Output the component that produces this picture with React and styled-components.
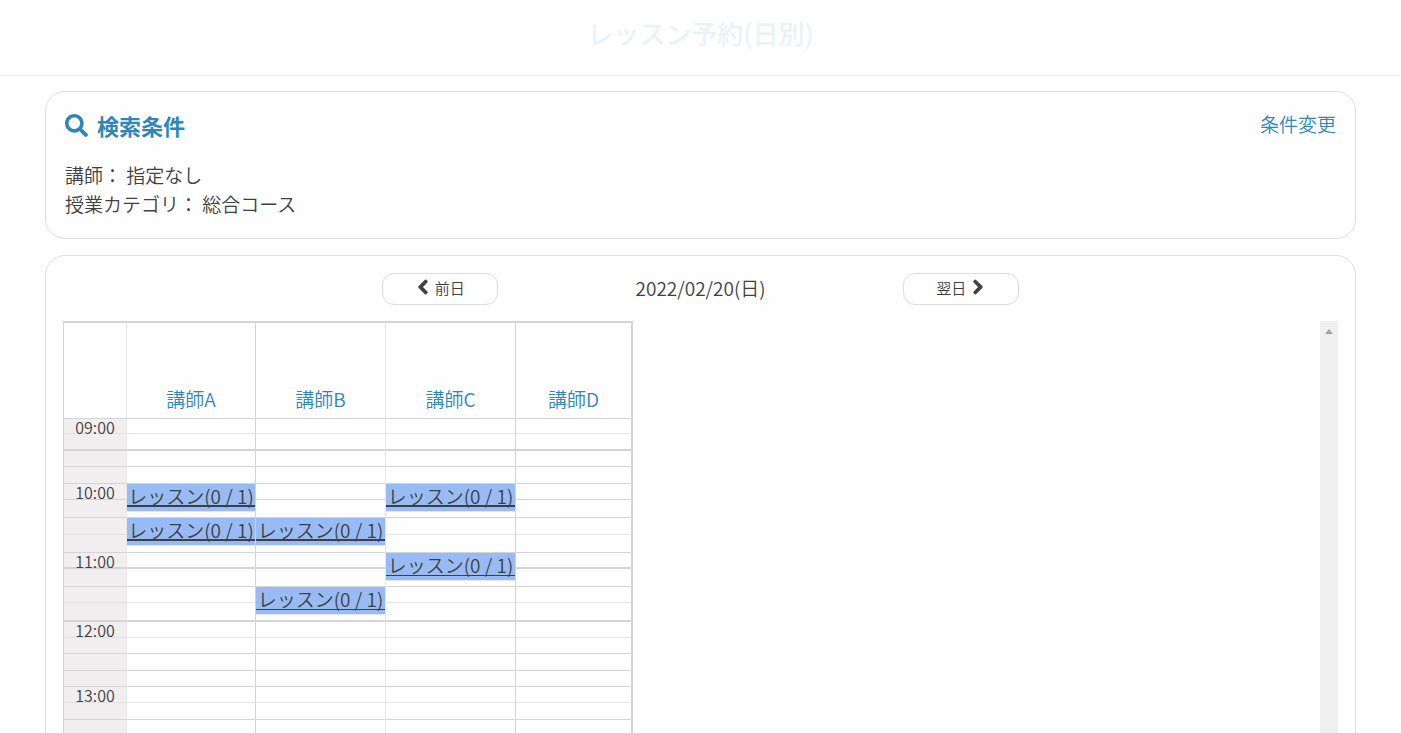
import React from "react"
import styled, { createGlobalStyle } from "styled-components"
import { FaSearch, FaChevronLeft, FaChevronRight } from "react-icons/fa"

const blue = "#2e86b9"
const line = "#d6d3d4"
const faint = "#e8e7e7"

const GlobalStyle = createGlobalStyle`
  * {
    box-sizing: border-box;
  }
  body {
    margin: 0;
    background: #fefefe;
    color: #3f3f3f;
    font-family: "Noto Sans CJK JP", sans-serif;
    font-size: 19px;
    font-weight: 350;
  }
  a {
    color: ${blue};
    text-decoration: none;
  }
`

const Page = styled.div`
  height: 100vh;
  overflow: hidden;
`

const Header = styled.header`
  padding: 14px 0 23px;
  border-bottom: 1px solid #efefef;
`

const Title = styled.h1`
  margin: 0;
  color: #eaf2f8;
  font-size: 26px;
  font-weight: 500;
  line-height: 38px;
  text-align: center;
`

const Main = styled.main`
  display: flex;
  flex-direction: column;
  gap: 16px;
  padding: 15px 45px;
`

const Card = styled.section`
  padding: ${p => p.$pad};
  border: 1px solid #dfdfdf;
  border-radius: 20px;
`

const CardHead = styled.div`
  display: flex;
  justify-content: space-between;
  margin-bottom: 20px;
  line-height: 28px;
`

const CardTitle = styled.h2`
  display: flex;
  align-items: center;
  gap: 9px;
  margin: 0;
  color: ${blue};
  font-size: 22px;
  font-weight: 700;
  line-height: 30px;
`

const Condition = styled.p`
  margin: 0;
  line-height: 29px;
`

const DayNav = styled.nav`
  display: flex;
  align-items: center;
  justify-content: space-between;
  width: 50%;
  margin: 0 auto 16px;
`

const CurrentDay = styled.span`
  height: 32px;
  line-height: 30px;
`

const DayButton = styled.button`
  display: flex;
  align-items: center;
  justify-content: center;
  gap: 4px;
  width: 116px;
  height: 32px;
  padding: 0 0 4px;
  border: 1px solid #dcdcdc;
  border-radius: 12px;
  background: transparent;
  color: inherit;
  font: inherit;
  font-size: 15px;

  > svg {
    overflow: visible;
    stroke: currentColor;
    stroke-width: 36px;
  }
`

const Schedule = styled.div`
  display: flex;
  justify-content: space-between;
`

const Table = styled.table`
  width: 570px;
  table-layout: fixed;
  border-spacing: 0;
  border: solid ${line};
  border-width: 2px 2px 2px 1px;
`

const Col = styled.col`
  width: ${p => p.$width}px;
`

const HeadCell = styled.th`
  height: 96px;
  padding: 0 0 5px;
  border-bottom: 1px solid ${line};
  border-right: 1px solid ${p => (p.$soft ? faint : line)};
  font-weight: inherit;
  line-height: 28px;
  vertical-align: bottom;

  &:last-child {
    border-right: 0;
  }
`

const Row = styled.tr`
  height: ${p => p.$height}px;
`

const TimeCell = styled.th`
  padding: 2px 0 0;
  border-right: 1px solid ${faint};
  border-bottom: ${p => (p.$rule === "thick" ? 2 : 1)}px solid
    ${p => (p.$rule === "soft" ? "#e2e0e1" : line)};
  background: #f0eeef;
  font-size: 16px;
  font-weight: 350;
  line-height: 12px;
  vertical-align: top;
`

const Cell = styled.td`
  padding: 0;
  border-right: 1px solid ${p => (p.$softEdge ? faint : line)};
  border-bottom: ${p => (p.$rule === "thick" ? 2 : 1)}px solid
    ${p => (p.$rule === "soft" ? faint : line)};
  vertical-align: top;

  &:last-child {
    border-right: 0;
  }
`

const Lesson = styled.a`
  display: block;
  height: 28px;
  border-bottom: 1px solid ${faint};
  background: #98bbf5;
  color: #3f3f3f;
`

const LessonLabel = styled.span`
  display: block;
  height: 23px;
  border-bottom: ${p => (p.$thin ? 1 : 2)}px solid #3f3f3f;
  line-height: 24px;
  text-align: center;
  white-space: nowrap;
`

const ScrollTrack = styled.div`
  width: 18px;
  padding-top: 8px;
  background: #f0f0f0;

  > svg {
    display: block;
    margin: 0 auto;
  }
`

const teachers = ["講師A", "講師B", "講師C", "講師D"]

// one entry per quarter hour, rule is the line drawn below it
const rows = [
  { time: "09:00", height: 15, rule: "soft" },
  { height: 17, rule: "thick" },
  { height: 16 },
  { height: 17 },
  { time: "10:00", height: 16, lessons: [0, 2] },
  { height: 18 },
  { height: 17, rule: "soft", lessons: [0, 1] },
  { height: 18 },
  { time: "11:00", height: 16, rule: "thick", lessons: [2], thin: true },
  { height: 18 },
  { height: 16, rule: "soft", lessons: [1], thin: true },
  { height: 19, rule: "thick" },
  { time: "12:00", height: 16, rule: "soft" },
  { height: 16 },
  { height: 17 },
  { height: 16 },
  { time: "13:00", height: 16, rule: "soft" },
  { height: 17 },
  { height: 16 },
  { height: 17 },
]

const hasLesson = (i, col) => {
  const row = rows[i]
  return Boolean(row && row.lessons && row.lessons.includes(col))
}

const ScheduleRow = ({ row, index }) => (
  <Row $height={row.height}>
    <TimeCell scope="row" $rule={row.rule}>
      {row.time}
    </TimeCell>
    {teachers.map((name, col) => {
      // covered by the lesson that starts in the row above
      if (hasLesson(index - 1, col)) return null
      const lesson = hasLesson(index, col)
      return (
        <Cell
          key={name}
          rowSpan={lesson ? 2 : 1}
          $rule={lesson ? rows[index + 1].rule : row.rule}
          $softEdge={col === 1}
        >
          {lesson && (
            <Lesson href="#lesson">
              <LessonLabel $thin={row.thin}>レッスン(0 / 1)</LessonLabel>
            </Lesson>
          )}
        </Cell>
      )
    })}
  </Row>
)

export default () => (
  <Page>
    <GlobalStyle />
    <Header>
      <Title>レッスン予約(日別)</Title>
    </Header>
    <Main>
      <Card $pad="18px 19px 20px">
        <CardHead>
          <CardTitle>
            <FaSearch size={23} />
            検索条件
          </CardTitle>
          <a href="#search">条件変更</a>
        </CardHead>
        <Condition>講師： 指定なし</Condition>
        <Condition>授業カテゴリ： 総合コース</Condition>
      </Card>
      <Card $pad="17px">
        <DayNav>
          <DayButton type="button">
            <FaChevronLeft size={16} />
            前日
          </DayButton>
          <CurrentDay>2022/02/20(日)</CurrentDay>
          <DayButton type="button">
            翌日
            <FaChevronRight size={16} />
          </DayButton>
        </DayNav>
        <Schedule>
          <Table>
            <colgroup>
              <Col $width={63} />
              <Col $width={129} />
              <Col $width={130} />
              <Col $width={130} />
              <Col $width={115} />
            </colgroup>
            <thead>
              <tr>
                <HeadCell $soft />
                {teachers.map((name, i) => (
                  <HeadCell key={name} scope="col" $soft={i === 1}>
                    <a href="#teacher">{name}</a>
                  </HeadCell>
                ))}
              </tr>
            </thead>
            <tbody>
              {rows.map((row, i) => (
                <ScheduleRow key={i} row={row} index={i} />
              ))}
            </tbody>
          </Table>
          <ScrollTrack>
            <svg width="8" height="5" viewBox="0 0 8 5">
              <path d="M0 5L4 0L8 5Z" fill="#a3a3a3" />
            </svg>
          </ScrollTrack>
        </Schedule>
      </Card>
    </Main>
  </Page>
)
